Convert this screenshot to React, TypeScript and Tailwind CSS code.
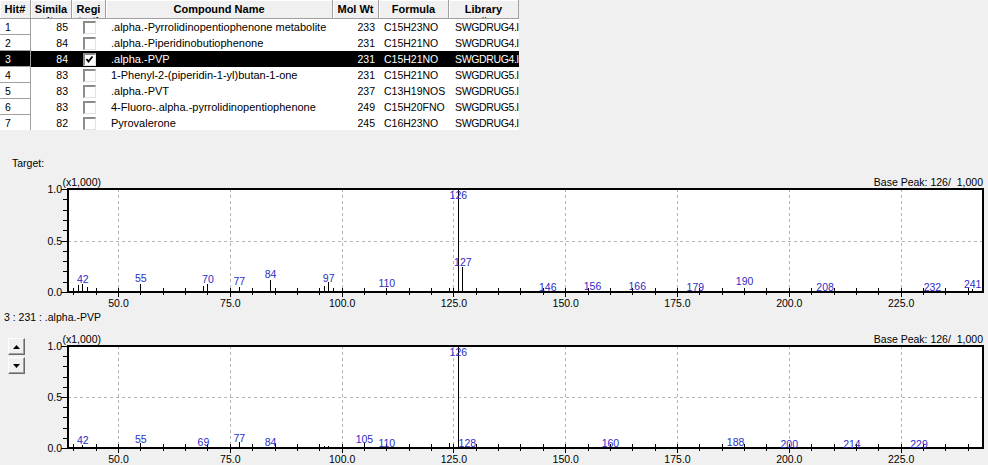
import React from "react";

type Peak = { m: number; h: number; ly?: number; full?: boolean };

const X = (m: number) => 118 + (m - 50) * 4.472;

const topPeaks: Peak[] = [
  { m: 41, h: 7 },
  { m: 42, h: 8, ly: 283 },
  { m: 43, h: 5 },
  { m: 55, h: 8, ly: 282 },
  { m: 69, h: 6 },
  { m: 70, h: 8, ly: 283 },
  { m: 77, h: 5, ly: 285 },
  { m: 84, h: 12, ly: 278 },
  { m: 96, h: 6 },
  { m: 97, h: 10, ly: 281.5 },
  { m: 98, h: 4 },
  { m: 110, h: 2, ly: 287 },
  { m: 124, h: 4 },
  { m: 126, h: 0, full: true, ly: 199 },
  { m: 127, h: 25, ly: 266 },
  { m: 146, h: 1, ly: 290.5 },
  { m: 156, h: 1, ly: 290 },
  { m: 166, h: 1, ly: 290 },
  { m: 179, h: 1, ly: 290.5 },
  { m: 190, h: 1, ly: 285 },
  { m: 208, h: 1, ly: 290.5 },
  { m: 232, h: 1, ly: 290.5 },
  { m: 241, h: 3, ly: 288 },
];

const botPeaks: Peak[] = [
  { m: 42, h: 3, ly: 444 },
  { m: 55, h: 5, ly: 443 },
  { m: 69, h: 1, ly: 445.5 },
  { m: 77, h: 6, ly: 441.5 },
  { m: 84, h: 1, ly: 445.5 },
  { m: 96, h: 2 },
  { m: 97, h: 2 },
  { m: 105, h: 5, ly: 443 },
  { m: 110, h: 1, ly: 446.5 },
  { m: 124, h: 5 },
  { m: 126, h: 0, full: true, ly: 355.5 },
  { m: 128, h: 1, ly: 447 },
  { m: 160, h: 1, ly: 446.5 },
  { m: 188, h: 1, ly: 445.5 },
  { m: 200, h: 1, ly: 448 },
  { m: 214, h: 1, ly: 447.5 },
  { m: 229, h: 1, ly: 447.5 },
];

function Chart({ top, bot, peaks, vb, w, h }: { top: number; bot: number; peaks: Peak[]; vb: string; w: number; h: number }) {
  const L = 68;
  const R = 983;
  const minor: number[] = [];
  for (let m = 40; m <= 240; m += 5) {
    const x = X(m);
    if (x > L + 2 && x < R - 2) minor.push(m);
  }
  const majors = [50, 75, 100, 125, 150, 175, 200, 225];
  const yt: number[] = [];
  for (let i = 0; i <= 10; i++) yt.push(bot - ((bot - top) * i) / 10);
  const mid = (top + bot) / 2;
  return (
    <svg width={w} height={h} viewBox={vb} className="block shrink-0">
      <rect x={L} y={top} width={R - L} height={bot - top} fill="#ffffff" />
      {majors.map((m) => (
        <line key={"g" + m} x1={Math.round(X(m)) + 0.5} x2={Math.round(X(m)) + 0.5} y1={top} y2={bot} stroke="#b4b4b4" strokeDasharray="3 3" />
      ))}
      <line x1={L} x2={R} y1={Math.round(mid) + 0.5} y2={Math.round(mid) + 0.5} stroke="#b4b4b4" strokeDasharray="3 3" />
      {peaks.map((p) => {
        const x = Math.round(X(p.m)) + 0.5;
        const y2 = p.full ? top : bot - p.h;
        return <line key={"p" + p.m} x1={x} x2={x} y1={bot} y2={y2} stroke="#000" strokeWidth={1} />;
      })}
      {minor.map((m) => {
        const x = Math.round(X(m)) + 0.5;
        const isMajor = m % 25 === 0;
        return <line key={"t" + m} x1={x} x2={x} y1={bot - 4} y2={bot + (isMajor ? 5 : 3)} stroke="#000" />;
      })}
      {yt.map((y, i) => (
        <line key={"y" + i} x1={i % 5 === 0 ? 61 : 63} x2={L} y1={Math.round(y) + 0.5} y2={Math.round(y) + 0.5} stroke="#000" />
      ))}
      <line x1={L - 1} x2={R + 1} y1={top} y2={top} stroke="#000" strokeWidth={2} />
      <line x1={L - 1} x2={R + 1} y1={bot} y2={bot} stroke="#000" strokeWidth={2} />
      <line x1={L} x2={L} y1={top} y2={bot} stroke="#000" strokeWidth={2} />
      <line x1={R} x2={R} y1={top} y2={bot} stroke="#000" strokeWidth={2} />
      {peaks
        .filter((p) => p.ly !== undefined)
        .map((p) => (
          <text key={"l" + p.m} x={X(p.m) + 0.5} y={p.ly} textAnchor="middle" fontSize={10.5} fill="#2c2cc8">
            {String(p.m)}
          </text>
        ))}
      <text x={62} y={top + 4} textAnchor="end" fontSize={10.5} fill="#000">1.0</text>
      <text x={62} y={mid + 4} textAnchor="end" fontSize={10.5} fill="#000">0.5</text>
      <text x={62} y={bot + 3.5} textAnchor="end" fontSize={10.5} fill="#000">0.0</text>
      <text x={62.5} y={top - 3} fontSize={10.5} fill="#000">(x1,000)</text>
      <text x={983} y={top - 3} textAnchor="end" fontSize={10.5} fill="#000">{"Base Peak: 126/\u00a0 1,000"}</text>
      {majors.map((m) => (
        <text key={"xl" + m} x={X(m) + 0.5} y={bot + 14.5} textAnchor="middle" fontSize={10.5} fill="#000">
          {m.toFixed(1)}
        </text>
      ))}
    </svg>
  );
}

type Row = { hit: string; sim: string; checked: boolean; name: string; mw: string; formula: string; lib: string; sel?: boolean };

const rows: Row[] = [
  { hit: "1", sim: "85", checked: false, name: ".alpha.-Pyrrolidinopentiophenone metabolite", mw: "233", formula: "C15H23NO", lib: "SWGDRUG4.lib" },
  { hit: "2", sim: "84", checked: false, name: ".alpha.-Piperidinobutiophenone", mw: "231", formula: "C15H21NO", lib: "SWGDRUG4.lib" },
  { hit: "3", sim: "84", checked: true, name: ".alpha.-PVP", mw: "231", formula: "C15H21NO", lib: "SWGDRUG4.lib", sel: true },
  { hit: "4", sim: "83", checked: false, name: "1-Phenyl-2-(piperidin-1-yl)butan-1-one", mw: "231", formula: "C15H21NO", lib: "SWGDRUG5.lib" },
  { hit: "5", sim: "83", checked: false, name: ".alpha.-PVT", mw: "237", formula: "C13H19NOS", lib: "SWGDRUG5.lib" },
  { hit: "6", sim: "83", checked: false, name: "4-Fluoro-.alpha.-pyrrolidinopentiophenone", mw: "249", formula: "C15H20FNO", lib: "SWGDRUG5.lib" },
  { hit: "7", sim: "82", checked: false, name: "Pyrovalerone", mw: "245", formula: "C16H23NO", lib: "SWGDRUG4.lib" },
];

function CheckBox({ checked }: { checked: boolean }) {
  return (
    <div className="w-[13px] h-[13px] bg-white border-t-2 border-l-2 border-r border-b border-t-[#8c8c8c] border-l-[#8c8c8c] border-r-[#e2e2e2] border-b-[#e2e2e2] flex items-center justify-center">
      {checked && (
        <svg width="9" height="9" viewBox="0 0 9 9">
          <polyline points="1.5,4 3.5,6.5 7.5,1.5" fill="none" stroke="#000" strokeWidth="1.8" />
        </svg>
      )}
    </div>
  );
}

const headCls =
  "h-[19px] overflow-hidden bg-[#f0f0f0] border-r border-b border-r-[#a0a0a0] border-b-[#a0a0a0] shadow-[inset_1px_1px_0_#ffffff] text-center font-bold text-[11px] leading-[12px] pt-[3px] shrink-0";

function SpinButton({ up }: { up: boolean }) {
  return (
    <div className="w-[17px] h-[17px] bg-[#f0f0f0] border border-t-[#ffffff] border-l-[#ffffff] border-r-[#696969] border-b-[#696969] shadow-[inset_-1px_-1px_0_#a0a0a0] flex items-center justify-center">
      <svg width="7" height="4" viewBox="0 0 7 4">
        {up ? <polygon points="0,4 7,4 3.5,0" fill="#000" /> : <polygon points="0,0 7,0 3.5,4" fill="#000" />}
      </svg>
    </div>
  );
}

export default function App() {
  return (
    <div className="w-[988px] h-[465px] bg-[#f0f0f0] overflow-hidden text-black [font-family:'Liberation_Sans',Arial,sans-serif]">
      <div className="h-[130px] overflow-hidden">
        <div className="w-[519px] bg-white">
          <div className="flex">
            <div className={headCls + " w-[31px]"}>Hit#</div>
            <div className={headCls + " w-[41px]"}>
              Simila
              <br />
              rity
            </div>
            <div className={headCls + " w-[34px]"}>
              Regi
              <br />
              stration
            </div>
            <div className={headCls + " w-[227px]"}>Compound Name</div>
            <div className={headCls + " w-[46px]"}>Mol Wt</div>
            <div className={headCls + " w-[70px]"}>Formula</div>
            <div className={headCls + " w-[70px]"}>
              Library
              <br />
              #
            </div>
          </div>
          {rows.map((r) => (
            <div key={r.hit} className={"flex h-[16px] text-[10.5px] leading-[16px] whitespace-nowrap " + (r.sel ? "bg-black text-white" : "bg-white text-black")}>
              <div className="w-[31px] shrink-0 pl-[5px] border-r border-b border-r-[#a0a0a0] border-b-[#a0a0a0]">{r.hit}</div>
              <div className="w-[41px] shrink-0 text-right pr-[4px]">{r.sim}</div>
              <div className="w-[34px] shrink-0 flex items-center justify-center">
                <CheckBox checked={r.checked} />
              </div>
              <div className="w-[227px] shrink-0 pl-[5px] overflow-hidden text-[11px]">{r.name}</div>
              <div className="w-[46px] shrink-0 text-right pr-[4px]">{r.mw}</div>
              <div className="w-[70px] shrink-0 pl-[5px] overflow-hidden">{r.formula}</div>
              <div className="w-[70px] shrink-0 pl-[6px] overflow-hidden tracking-[-0.35px]">{r.lib}</div>
            </div>
          ))}
        </div>
      </div>
      <div className="h-[42px] pt-[27px] pl-[12px] text-[10.5px] leading-[12px]">Target:</div>
      <Chart top={189} bot={292} peaks={topPeaks} vb="0 172 988 139" w={988} h={139} />
      <div className="h-[12px] pl-[4px] text-[10.5px] leading-[12px] whitespace-nowrap">3 : 231 : .alpha.-PVP</div>
      <div className="flex h-[142px]">
        <div className="w-[32px] shrink-0 pt-[15px] pl-[8px] flex flex-col gap-[2px]">
          <SpinButton up={true} />
          <SpinButton up={false} />
        </div>
        <Chart top={346} bot={448} peaks={botPeaks} vb="32 323 956 142" w={956} h={142} />
      </div>
    </div>
  );
}
